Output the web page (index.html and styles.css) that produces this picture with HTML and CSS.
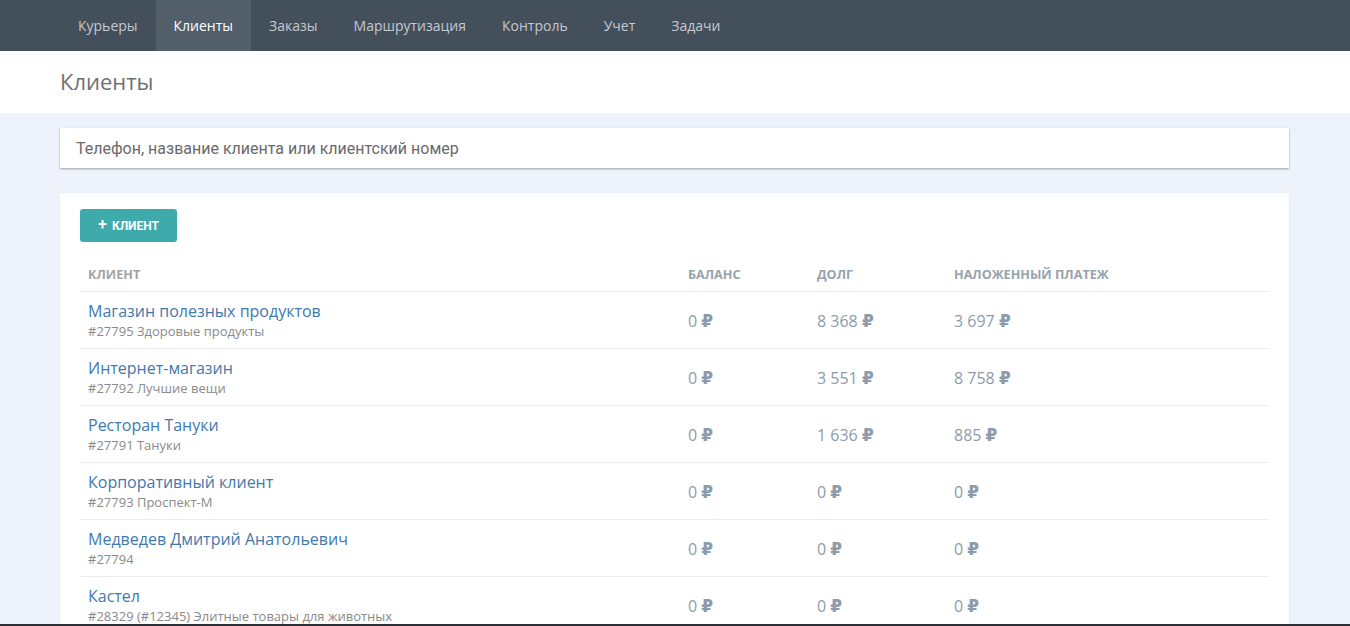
FILE: index.html
```html
<!DOCTYPE html>
<html lang="ru">
<head>
<meta charset="utf-8">
<title>Клиенты</title>
<link rel="stylesheet" href="styles.css">
</head>
<body>
<nav class="topnav">
  <ul class="nav-list">
    <li class="nav-item">Курьеры</li>
    <li class="nav-item active">Клиенты</li>
    <li class="nav-item">Заказы</li>
    <li class="nav-item">Маршрутизация</li>
    <li class="nav-item">Контроль</li>
    <li class="nav-item">Учет</li>
    <li class="nav-item">Задачи</li>
  </ul>
</nav>
<header class="page-header">
  <h1 class="page-title">Клиенты</h1>
</header>
<main class="content">
  <div class="search-card">
    <span class="search-placeholder">Телефон, название клиента или клиентский номер</span>
  </div>
  <section class="table-card">
    <button class="add-btn"><span class="plus">+</span> КЛИЕНТ</button>
    <div class="table">
      <div class="row head">
        <div>Клиент</div><div>Баланс</div><div>Долг</div><div>Наложенный платеж</div>
      </div>
      <div class="row">
        <div><div class="name">Магазин полезных продуктов</div><div class="sub">#27795 Здоровые продукты</div></div>
        <div class="val">0 <span class="rub">₽</span></div><div class="val">8 368 <span class="rub">₽</span></div><div class="val">3 697 <span class="rub">₽</span></div>
      </div>
      <div class="row">
        <div><div class="name">Интернет-магазин</div><div class="sub">#27792 Лучшие вещи</div></div>
        <div class="val">0 <span class="rub">₽</span></div><div class="val">3 551 <span class="rub">₽</span></div><div class="val">8 758 <span class="rub">₽</span></div>
      </div>
      <div class="row">
        <div><div class="name">Ресторан Тануки</div><div class="sub">#27791 Тануки</div></div>
        <div class="val">0 <span class="rub">₽</span></div><div class="val">1 636 <span class="rub">₽</span></div><div class="val">885 <span class="rub">₽</span></div>
      </div>
      <div class="row">
        <div><div class="name">Корпоративный клиент</div><div class="sub">#27793 Проспект-М</div></div>
        <div class="val">0 <span class="rub">₽</span></div><div class="val">0 <span class="rub">₽</span></div><div class="val">0 <span class="rub">₽</span></div>
      </div>
      <div class="row">
        <div><div class="name">Медведев Дмитрий Анатольевич</div><div class="sub">#27794</div></div>
        <div class="val">0 <span class="rub">₽</span></div><div class="val">0 <span class="rub">₽</span></div><div class="val">0 <span class="rub">₽</span></div>
      </div>
      <div class="row">
        <div><div class="name">Кастел</div><div class="sub">#28329 (#12345) Элитные товары для животных</div></div>
        <div class="val">0 <span class="rub">₽</span></div><div class="val">0 <span class="rub">₽</span></div><div class="val">0 <span class="rub">₽</span></div>
      </div>
    </div>
  </section>
</main>
<div class="bottom-bar"></div>
</body>
</html>
```

FILE: styles.css
```css
* { box-sizing: border-box; }
html, body { margin: 0; padding: 0; }
body {
  background: #eef2fb;
  font-family: "Open Sans", "DejaVu Sans", sans-serif;
  overflow: hidden;
  height: 626px;
}
.topnav {
  background: #444f5c;
  height: 51px;
  padding-left: 60px;
}
.nav-list {
  list-style: none;
  margin: 0;
  padding: 0;
  display: flex;
  height: 51px;
}
.nav-item {
  padding: 0 18px;
  line-height: 51px;
  font-size: 14px;
  color: #c3c9cf;
}
.nav-item.active {
  background: #525e69;
  color: #ffffff;
}
.page-header {
  background: #ffffff;
  height: 62px;
  padding-left: 60px;
  display: flex;
  align-items: center;
}
.page-title {
  margin: 0;
  font-size: 22px;
  font-weight: 400;
  color: #707070;
  padding-bottom: 2px;
}
.content {
  padding: 15px 0 0 60px;
  width: 1289px;
}
.search-card {
  background: #fff;
  height: 40px;
  display: flex;
  align-items: center;
  padding-left: 16px;
  box-shadow: 0 1px 2px rgba(0,0,0,0.35);
}
.search-placeholder {
  font-family: Roboto, sans-serif;
  font-size: 16px;
  color: #6a6a6a;
}
.table-card {
  margin-top: 25px;
  background: #fff;
  border-radius: 2px;
  padding: 16px 20px 0 20px;
  height: 460px;
  box-shadow: 0 0 2px rgba(0,0,0,0.06);
}
.add-btn {
  width: 97px;
  height: 33px;
  border: none;
  border-radius: 3px;
  background: #3eaaab;
  color: #fff;
  font-family: Roboto, sans-serif;
  font-weight: 700;
  font-size: 12px;
  padding: 0;
  display: flex;
  align-items: center;
  justify-content: center;
  gap: 5px;
}
.plus { font-size: 16px; font-weight: 500; line-height: 1; margin-top: -1px; }
.table { margin-top: 16px; }
.row {
  display: grid;
  grid-template-columns: 600px 129px 137px 1fr;
  border-bottom: 1px solid #eeeeee;
  padding: 8px 8px;
  align-items: center;
}
.row.head {
  height: 34px;
  padding-top: 0;
  padding-bottom: 0;
  font-size: 12.6px;
  font-weight: 700;
  text-transform: uppercase;
  color: #98a2ac;
}
.row.head > div:first-child { color: #a3a3a3; }
.name {
  font-size: 16px;
  line-height: 22px;
  color: #3f79ae;
}
.sub {
  font-size: 13px;
  line-height: 18px;
  color: #8a8a8a;
}
.val {
  font-size: 16px;
  color: #8e9baa;
  padding-top: 0;
}
.rub { font-weight: 700; font-size: 17px; }
.bottom-bar {
  position: fixed;
  left: 0;
  right: 0;
  bottom: 0;
  height: 2px;
  background: #2c3036;
}
```
